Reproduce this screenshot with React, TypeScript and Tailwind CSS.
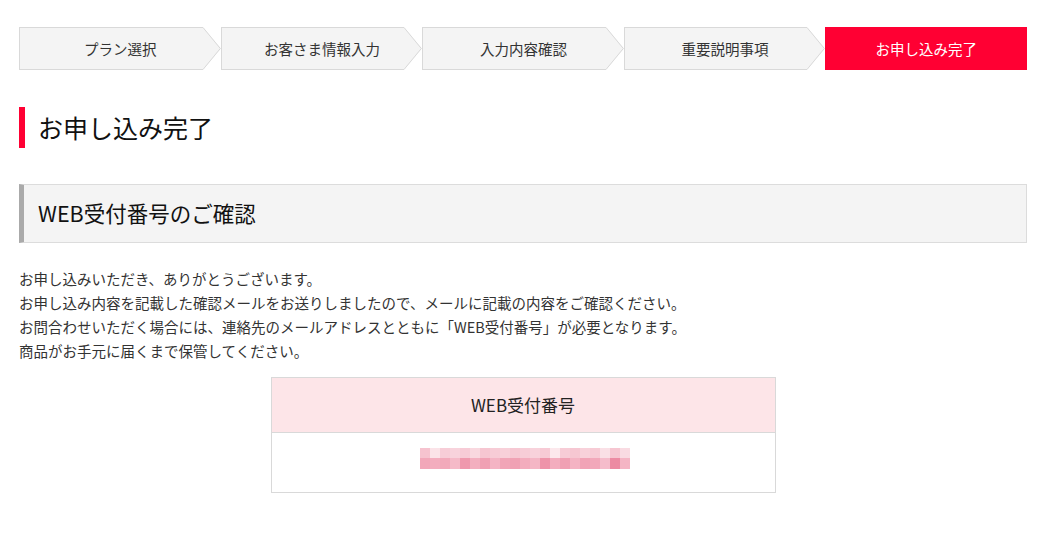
import React from 'react'

const steps = ['プラン選択', 'お客さま情報入力', '入力内容確認', '重要説明事項', 'お申し込み完了']

const paragraphs = [
  'お申し込みいただき、ありがとうございます。',
  'お申し込み内容を記載した確認メールをお送りしましたので、メールに記載の内容をご確認ください。',
  'お問合わせいただく場合には、連絡先のメールアドレスとともに「WEB受付番号」が必要となります。',
  '商品がお手元に届くまで保管してください。',
]

// pixelated (masked) reception number
const topRow = ['#f6c3cf', '#fbe3e8', '#f7cdd7', '#f8d3dc', '#f7cbd6', '#f9d8df', '#f6c6d1', '#f7ccd6', '#f8d0d9', '#f6c8d3', '#f7cdd7', '#f8d2db', '#f7cad5', '#fce8ec', '#f7ccd6', '#f6c7d2', '#f8d1da', '#f7cbd5', '#fae0e6', '#f6c6d1', '#f9dbe2']
const bottomRow = ['#f2a7b9', '#f3adbe', '#f2a9ba', '#f5bac8', '#ef98ad', '#f3afbf', '#f0a0b3', '#f4b4c4', '#f1a5b7', '#f0a1b4', '#f3acbd', '#f4b6c5', '#ee93a9', '#f3adbe', '#f0a0b3', '#f4b3c3', '#f1a3b6', '#f2a8ba', '#f5bccb', '#ec8aa2', '#f4b5c4']

function Step({ label, last }: { label: string; last: boolean }) {
  if (last) {
    return (
      <div className="flex h-[43px] items-center justify-center bg-[#ff0033] text-[14.5px] text-white">
        {label}
      </div>
    )
  }
  return (
    <div className="flex h-[43px]">
      <div className="flex flex-1 items-center justify-center border-y border-l border-[#d9d9d9] bg-[#f4f4f4] pl-[18px] text-[14.5px] text-[#333]">
        {label}
      </div>
      <svg width="18" height="43" viewBox="0 0 18 43" className="shrink-0">
        <polygon points="0,0 0,43 18,21.5" fill="#f4f4f4" />
        <polyline points="0,0.5 17.3,21.5 0,42.5" fill="none" stroke="#d9d9d9" strokeWidth="1" />
      </svg>
    </div>
  )
}

export default function App() {
  return (
    <div
      className="min-h-[550px] bg-white pt-[27px] pl-[19px]"
      style={{ fontFamily: '"Noto Sans CJK JP", "Noto Sans", sans-serif' }}
    >
      <div className="w-[1008px]">
        <div className="grid grid-cols-5">
          {steps.map((s, i) => (
            <Step key={s} label={s} last={i === steps.length - 1} />
          ))}
        </div>

        <h1 className="mt-[37px] flex h-[41px] items-center border-l-[6px] border-[#ff0033] pl-[13px] text-[25px] font-normal text-[#111]">
          お申し込み完了
        </h1>

        <div className="mt-[36px] flex h-[59px] items-center border border-l-[5px] border-[#dcdcdc] border-l-[#aaaaaa] bg-[#f4f4f4] pl-[14px] text-[21.5px] font-normal text-[#111]">
          WEB受付番号のご確認
        </div>

        <div className="mt-[24px] text-[14.5px] leading-[24px] text-[#333]">
          {paragraphs.map((p) => (
            <p key={p}>{p}</p>
          ))}
        </div>

        <div className="mx-auto mt-[14px] w-[505px] border border-[#d9d9d9]">
          <div className="flex h-[55px] items-center justify-center border-b border-[#d9d9d9] bg-[#fde5e8] text-[17px] text-[#222]">
            WEB受付番号
          </div>
          <div className="flex h-[59px] justify-center pt-[15px] pl-[4px]">
            <div className="flex flex-col">
              <div className="flex">
                {topRow.map((c, i) => (
                  <div key={i} className="h-[10px] w-[10px]" style={{ backgroundColor: c }} />
                ))}
              </div>
              <div className="flex">
                {bottomRow.map((c, i) => (
                  <div key={i} className="h-[11px] w-[10px]" style={{ backgroundColor: c }} />
                ))}
              </div>
            </div>
          </div>
        </div>
      </div>
    </div>
  )
}
